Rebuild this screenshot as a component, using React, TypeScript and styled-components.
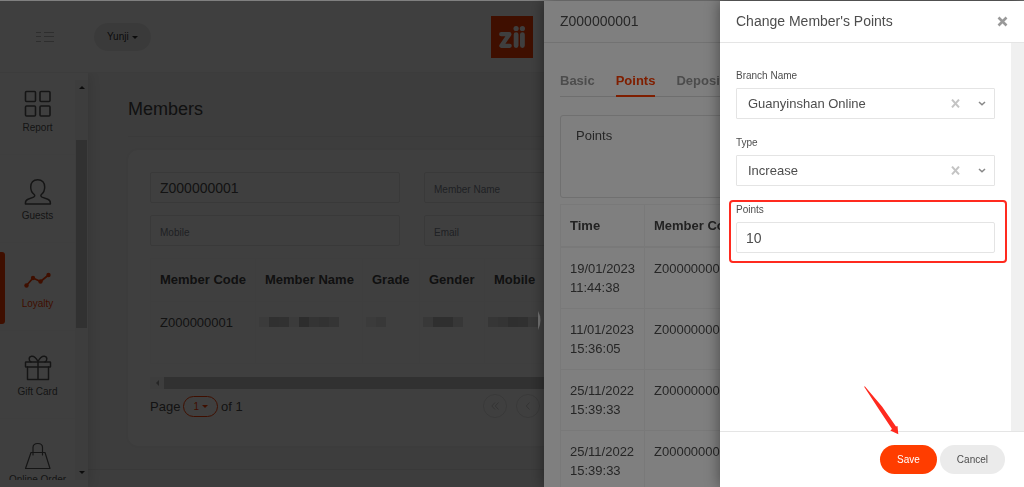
import React from 'react';
import styled, { createGlobalStyle, css } from 'styled-components';

const GlobalStyle = createGlobalStyle`
  *, *::before, *::after { box-sizing: border-box; }
  html, body { margin: 0; height: 100%; overflow: hidden; }
  #root { height: 100%; }
  body {
    font-family: "Liberation Sans", Arial, sans-serif;
    font-size: 13px;
    color: #4d4d4d;
    background: #808080;
  }
  button, input, select { font: inherit; color: inherit; }
`;

const Shell = styled.div`
  display: grid;
  grid-template-rows: auto 1fr;
  height: 100vh;
  padding-top: 1px;
`;

const TopBar = styled.header`
  display: grid;
  grid-template-columns: 1fr auto 1fr;
  align-items: center;
  padding: 15px 36px 14px;
  background: #fff;
  border-bottom: 1px solid #f0f0f0;
`;

const TopLeft = styled.div`
  display: flex;
  align-items: center;
  gap: 40px;
`;

const MenuButton = styled.button`
  display: flex;
  padding: 0;
  border: 0;
  background: none;
  color: #bbb;
`;

const BranchButton = styled.button`
  display: flex;
  align-items: center;
  gap: 3px;
  padding: 8px 13px;
  border: 0;
  border-radius: 14px;
  background: #ebebeb;
  color: #333;
  font-size: 10px;
  line-height: 12px;
`;

const Caret = styled.span`
  border: 3px solid transparent;
  border-top-color: currentColor;
  border-bottom: 0;
`;

const Body = styled.div`
  display: grid;
  grid-template-columns: 88px 1fr;
  min-height: 0;
  overflow: hidden;
`;

const Sidebar = styled.aside`
  position: relative;
  display: grid;
  grid-template-columns: 1fr 13px;
  min-height: 0;
  padding: 7px 0;
  background: #fff;
  box-shadow: 2px 0 12px rgba(0, 0, 0, 0.12);
`;

const NavList = styled.nav`
  min-height: 0;
  overflow: hidden;
`;

const NavItem = styled.a<{ $active?: boolean; $first?: boolean }>`
  position: relative;
  display: flex;
  flex-direction: column;
  align-items: center;
  gap: 2px;
  padding: ${p => (p.$first ? 10 : 23)}px 0 18px;
  border-bottom: 1px solid #f8f8f8;
  color: ${p => (p.$active ? '#ff3d00' : '#555')};
  font-size: 10px;
  line-height: 16px;
  text-decoration: none;
  white-space: nowrap;

  ${p => p.$active && css`
    &::before {
      content: '';
      position: absolute;
      left: 0;
      top: 9px;
      bottom: 6px;
      width: 5px;
      border-radius: 0 3px 3px 0;
      background: #ff3d00;
    }
  `}
`;

const ScrollTrack = styled.div`
  display: flex;
  flex-direction: column;
  align-items: center;
  background: #f5f5f5;
  color: #333;
`;

const ScrollArrow = styled.span<{ $down?: boolean }>`
  margin: 6px 0;
  border: 3px solid transparent;
  ${p => p.$down
    ? 'border-top-color: currentColor; border-bottom: 0;'
    : 'border-bottom-color: currentColor; border-top: 0;'}
`;

const ScrollThumb = styled.span`
  flex: 0 0 47%;
  width: 11px;
  margin-top: 45px;
  margin-bottom: auto;
  background: #c4c4c4;
`;

const Main = styled.main`
  display: flex;
  flex-direction: column;
  min-width: 0;
  overflow: hidden;
  padding-top: 25px;
  background: #f5f5f5;
`;

const Content = styled.div`
  padding: 0 54px 23px 40px;
`;

const PageTitle = styled.h1`
  margin: 0 0 13px;
  padding-bottom: 16px;
  border-bottom: 1px solid #e9e9e9;
  color: #444;
  font-size: 18px;
  font-weight: 400;
  line-height: 22px;
`;

const Card = styled.section`
  padding: 22px 22px 28px;
  border-radius: 10px;
  background: #fff;
  box-shadow: 0 0 4px rgba(0, 0, 0, 0.05);
`;

const Filters = styled.form`
  display: grid;
  grid-template-columns: repeat(3, 1fr);
  gap: 12px 24px;
  margin-bottom: 12px;
`;

const TextInput = styled.input`
  width: 100%;
  height: 31px;
  padding: 0 9px;
  border: 1px solid #e4e4e4;
  border-radius: 2px;
  outline: 0;
  background: #fff;
  font-size: 14px;
  &::placeholder { color: #7c8590; font-size: 10px; opacity: 1; }
`;

const MemberTable = styled.table`
  width: 100%;
  border-collapse: collapse;
  table-layout: fixed;
  margin-bottom: 13px;
  text-align: left;
  line-height: 18px;
  th, td { padding: 12px 9px; border: 1px solid #f8f8f8; vertical-align: top; white-space: nowrap; }
  th { color: #444; }
  td { padding-bottom: 31px; }
`;

const Mosaic = styled.span`
  display: flex;
  height: 10px;
  margin: 3px -9px 0 -6px;
`;

const Tile = styled.i<{ $shade: string }>`
  width: 10px;
  background: ${p => p.$shade};
`;

const HScroll = styled.div`
  display: grid;
  grid-template-columns: 14px 1fr 14px;
  height: 12px;
  background: #f5f5f5;
  color: #999;
`;

const HArrow = styled.span`
  place-self: center;
  border: 3px solid transparent;
  border-right-color: currentColor;
  border-left: 0;
`;

const HThumb = styled.span`
  background: #c4c4c4;
`;

const Pager = styled.div`
  display: grid;
  grid-template-columns: 5fr 7fr;
  align-items: center;
  margin-top: 5px;
`;

const PagerLabel = styled.div`
  display: flex;
  align-items: center;
  gap: 3px;
`;

const PagePill = styled.button`
  display: flex;
  align-items: center;
  gap: 3px;
  padding: 3px 9px;
  border: 1px solid #ff3d00;
  border-radius: 11px;
  background: none;
  color: #ff3d00;
  font-size: 10px;
  line-height: 13px;
`;

const PagerButtons = styled.div`
  display: flex;
  gap: 9px;
`;

const RoundButton = styled.button`
  display: grid;
  place-items: center;
  width: 24px;
  height: 24px;
  padding: 0;
  border: 1px solid #e3e3e3;
  border-radius: 50%;
  background: none;
  color: #ccc;
`;

const Footer = styled.footer`
  flex: 1;
  border-top: 1px solid #e6e6e6;
`;

const Overlay = styled.div`
  position: fixed;
  inset: 1px 0 0;
  display: flex;
  justify-content: flex-end;
  background: rgba(0, 0, 0, 0.5);
`;

const Drawer = styled.section<{ $width: number }>`
  display: flex;
  flex-direction: column;
  width: ${p => p.$width}px;
  max-width: 100%;
  overflow: hidden;
  background: #fff;
  box-shadow: 0 0 14px rgba(0, 0, 0, 0.45);
`;

const DrawerHead = styled.header`
  display: flex;
  align-items: center;
  justify-content: space-between;
  padding: 10px 16px;
  border-bottom: 1px solid #e5e5e5;
`;

const DrawerTitle = styled.h2`
  margin: 0;
  font-size: 14px;
  font-weight: 400;
  line-height: 21px;
`;

const IconButton = styled.button`
  display: flex;
  padding: 0;
  border: 0;
  background: none;
  color: #999;
`;

const DetailBody = styled.div`
  padding: 28px 16px 0;
`;

const Tabs = styled.div`
  display: flex;
  gap: 21px;
  margin-bottom: 18px;
  border-bottom: 1px solid #ddd;
`;

const Tab = styled.button<{ $active?: boolean }>`
  margin-bottom: -1px;
  padding: 0 0 5px;
  border: 0;
  border-bottom: 2px solid ${p => (p.$active ? '#ff3d00' : 'transparent')};
  background: none;
  color: ${p => (p.$active ? '#ff3d00' : '#999')};
  font-weight: 700;
  line-height: 19px;
`;

const PointsCard = styled.div`
  min-height: 83px;
  margin-bottom: 6px;
  padding: 10px 15px;
  border: 1px solid #e0e0e0;
  border-radius: 3px;
  line-height: 19px;
`;

const HistoryTable = styled.table`
  width: 100%;
  border-collapse: collapse;
  table-layout: fixed;
  text-align: left;
  line-height: 19px;
  th, td { padding: 11px 9px; border: 1px solid #f3f3f3; vertical-align: top; }
  th { color: #444; border-bottom-width: 2px; }
`;

const FormArea = styled.div`
  display: grid;
  grid-template-columns: 1fr 13px;
  flex: 1;
  min-height: 0;
`;

const FormFields = styled.form`
  display: flex;
  flex-direction: column;
  gap: 16px;
  padding: 25px 16px;
`;

const Track = styled.div`
  background: #f0f0f0;
`;

const Field = styled.div<{ $marked?: boolean }>`
  position: relative;
  display: flex;
  flex-direction: column;
  gap: 5px;

  ${p => p.$marked && css`
    &::after {
      content: '';
      position: absolute;
      inset: -2px -12px -10px -7px;
      border: 2px solid #ff2a1f;
      border-radius: 4px;
      pointer-events: none;
    }
  `}
`;

const Label = styled.label`
  font-size: 10px;
  line-height: 15px;
`;

const SelectBox = styled.div`
  position: relative;
`;

const Select = styled.select`
  appearance: none;
  display: block;
  width: 100%;
  height: 31px;
  padding: 0 60px 0 11px;
  border: 1px solid #e4e4e4;
  border-radius: 1px;
  background: #fff;
`;

const SelectTools = styled.div`
  position: absolute;
  top: 0;
  right: 9px;
  bottom: 0;
  display: flex;
  align-items: center;
  gap: 18px;
  pointer-events: none;
`;

const DrawerFoot = styled.footer`
  display: flex;
  justify-content: flex-end;
  gap: 3px;
  padding: 13px 19px;
  border-top: 1px solid #e5e5e5;
`;

const Action = styled.button<{ $primary?: boolean }>`
  padding: 7px 17px;
  border: 0;
  border-radius: 15px;
  background: ${p => (p.$primary ? '#ff3d00' : '#ebebeb')};
  color: ${p => (p.$primary ? '#fff' : '#4d4d4d')};
  font-size: 10px;
  line-height: 15px;
`;

const Pointer = styled.svg`
  position: fixed;
  right: 124px;
  bottom: 52px;
  pointer-events: none;
`;

const Handle = styled.svg`
  position: fixed;
  right: 480px;
  top: 309px;
`;

const stroke = { fill: 'none', stroke: 'currentColor', strokeWidth: 1.6, strokeLinejoin: 'round', strokeLinecap: 'round' } as const;

const ReportIcon = () => (
  <svg width="28" height="28" viewBox="0 0 28 28" {...stroke}>
    <rect x="1.500" y="1.500" width="10" height="10" rx="1" /><rect x="16" y="1.500" width="10" height="10" rx="1" />
    <rect x="1.500" y="16" width="10" height="10" rx="1" /><rect x="16" y="16" width="10" height="10" rx="1" />
  </svg>
);
const GuestIcon = () => (
  <svg width="28" height="28" viewBox="0 0 28 28" {...stroke} strokeWidth="1.500">
    <path d="M13.700 1.700c-4.600 0-7 3.200-7 7.300 0 3.300 1.200 5.800 3.500 7.500.9.900.6 2.100-.6 2.600l-5.600 2.200c-2 .8-2.600 1.900-2.600 3.900v.8h25v-.8c0-2-.6-3.100-2.600-3.900l-5.800-2.200c-1.200-.5-1.500-1.700-.6-2.600C19.600 14.800 20.700 12.300 20.700 9c0-4.100-2.400-7.300-7-7.300z" />
  </svg>
);
const LoyaltyIcon = () => (
  <svg width="28" height="28" viewBox="0 0 28 28" {...stroke}>
    <path d="M2.500 19.500 9 12l7.500 3.500L24.500 9" strokeWidth="1.800" />
    <g fill="currentColor" stroke="none"><circle cx="2.500" cy="19.500" r="2.200" /><circle cx="9" cy="12" r="2.200" /><circle cx="16.500" cy="15.500" r="2.200" /><circle cx="24.500" cy="9" r="2.200" /></g>
  </svg>
);
const GiftIcon = () => (
  <svg width="28" height="28" viewBox="0 0 28 28" {...stroke} strokeWidth="1.500">
    <rect x="1.500" y="8" width="25" height="5" rx=".5" /><path d="M3.500 13V25.500h21V13M14 8V25.500M14 7.500C12.500 4.500 10 2 7.500 2.300 4.500 2.800 4.500 6.800 7 8M14 7.500c1.500-3 4-5.500 6.500-5.200 3 .5 3 4.500.5 5.700" />
  </svg>
);
const BagIcon = () => (
  <svg width="28" height="28" viewBox="0 0 28 28" {...stroke} strokeWidth="1.200">
    <path d="M7 10.500h14L26 26.500H1.500zM9 13V5.500C9 3 10.500 1.500 13.800 1.500s4.700 1.500 4.700 4V13" />
  </svg>
);

const MenuIcon = () => (
  <svg width="18" height="12" viewBox="0 0 18 12" stroke="currentColor" strokeWidth="1">
    <path d="M0 1.500h5M8 1.500h10M0 5.500h5M8 5.500h10M0 10.500h5M8 10.500h10" />
  </svg>
);

const Logo = () => (
  <svg width="42" height="42" viewBox="0 0 42 42" role="img" aria-label="zii">
    <rect width="42" height="42" fill="#ff3d00" />
    <g fill="none" stroke="#fff" strokeLinecap="round" strokeLinejoin="round">
      <path d="M10.200 18.200h8.200L10.400 29.800h8.300" strokeWidth="4.200" />
      <path d="M25.100 18.600v11M31.400 18.600v11" strokeWidth="4.800" />
    </g>
    <circle cx="25.100" cy="12.500" r="2.600" fill="#fff" /><circle cx="31.400" cy="12.500" r="2.600" fill="#fff" />
  </svg>
);

const ClearIcon = () => (
  <svg width="9" height="9" viewBox="0 0 9 9" stroke="#c4c4c4" strokeWidth="2"><path d="M1 .6l7 7.800M8 .6L1 8.400" /></svg>
);
const ChevronIcon = () => (
  <svg width="8" height="5" viewBox="0 0 8 5" fill="none" stroke="#888" strokeWidth="1.500"><path d="M1 1l3 2.800L7 1" /></svg>
);

const navItems = [
  { label: 'Report', icon: <ReportIcon /> },
  { label: 'Guests', icon: <GuestIcon /> },
  { label: 'Loyalty', icon: <LoyaltyIcon />, active: true },
  { label: 'Gift Card', icon: <GiftIcon /> },
  { label: 'Online Order', icon: <BagIcon /> },
];

const masked = [
  ['#ececec', '#c0c0c0', '#c4c4c4', '#ececec', '#b4b4b4', '#d0d0d0', '#c8c8c8', '#d4d4d4'],
  ['#ececec', '#e0e0e0'],
  ['#e0e0e0', '#bcbcbc', '#bcbcbc', '#dcdcdc'],
  ['#d8d8d8', '#d0d0d0', '#bcbcbc', '#c0c0c0', '#dcdcdc'],
];

const history = [
  ['19/01/2023', '11:44:38'],
  ['11/01/2023', '15:36:05'],
  ['25/11/2022', '15:39:33'],
  ['25/11/2022', '15:39:33'],
];

function PickerField({ id, label, value }: { id: string; label: string; value: string }) {
  return (
    <Field>
      <Label htmlFor={id}>{label}</Label>
      <SelectBox>
        <Select id={id} defaultValue={value}><option>{value}</option></Select>
        <SelectTools><ClearIcon /><ChevronIcon /></SelectTools>
      </SelectBox>
    </Field>
  );
}

export default function App() {
  return (
    <>
      <GlobalStyle />
      <Shell>
        <TopBar>
          <TopLeft>
            <MenuButton aria-label="Menu"><MenuIcon /></MenuButton>
            <BranchButton>Yunji<Caret /></BranchButton>
          </TopLeft>
          <Logo />
        </TopBar>
        <Body>
          <Sidebar>
            <NavList>
              {navItems.map((item, i) => (
                <NavItem key={item.label} href="#" $active={item.active} $first={i === 0}>
                  {item.icon}
                  {item.label}
                </NavItem>
              ))}
            </NavList>
            <ScrollTrack><ScrollArrow /><ScrollThumb /><ScrollArrow $down /></ScrollTrack>
          </Sidebar>
          <Main>
            <Content>
              <PageTitle>Members</PageTitle>
              <Card>
                <Filters>
                  <TextInput aria-label="Member Code" defaultValue="Z000000001" />
                  <TextInput aria-label="Member Name" placeholder="Member Name" />
                  <span />
                  <TextInput aria-label="Mobile" placeholder="Mobile" />
                  <TextInput aria-label="Email" placeholder="Email" />
                </Filters>
                <MemberTable>
                  <colgroup><col width="105" /><col width="107" /><col width="57" /><col width="65" /><col /></colgroup>
                  <thead>
                    <tr><th>Member Code</th><th>Member Name</th><th>Grade</th><th>Gender</th><th>Mobile</th></tr>
                  </thead>
                  <tbody>
                    <tr>
                      <td>Z000000001</td>
                      {masked.map((tiles, i) => (
                        <td key={i}><Mosaic>{tiles.map((shade, j) => <Tile key={j} $shade={shade} />)}</Mosaic></td>
                      ))}
                    </tr>
                  </tbody>
                </MemberTable>
                <HScroll><HArrow /><HThumb /></HScroll>
                <Pager>
                  <PagerLabel>Page <PagePill>1<Caret /></PagePill> of 1</PagerLabel>
                  <PagerButtons>
                    <RoundButton aria-label="First page"><svg width="8" height="8" viewBox="0 0 8 8" fill="none" stroke="currentColor"><path d="M4 .5L.8 4 4 7.500M7.500.5L4.300 4l3.200 3.500" /></svg></RoundButton>
                    <RoundButton aria-label="Previous page"><svg width="8" height="8" viewBox="0 0 8 8" fill="none" stroke="currentColor"><path d="M5.500.5L2.300 4l3.200 3.500" /></svg></RoundButton>
                  </PagerButtons>
                </Pager>
              </Card>
            </Content>
            <Footer />
          </Main>
        </Body>
      </Shell>

      <Overlay>
        <Drawer $width={480}>
          <DrawerHead><DrawerTitle>Z000000001</DrawerTitle></DrawerHead>
          <DetailBody>
            <Tabs role="tablist">
              <Tab role="tab">Basic</Tab>
              <Tab role="tab" $active>Points</Tab>
              <Tab role="tab">Deposit</Tab>
            </Tabs>
            <PointsCard>Points</PointsCard>
            <HistoryTable>
              <colgroup><col width="84" /><col /></colgroup>
              <thead><tr><th>Time</th><th>Member Code</th></tr></thead>
              <tbody>
                {history.map(([date, time], i) => (
                  <tr key={i}><td>{date}<br />{time}</td><td>Z000000001</td></tr>
                ))}
              </tbody>
            </HistoryTable>
          </DetailBody>
        </Drawer>
      </Overlay>

      <Overlay>
        <Handle width="8" height="24" viewBox="0 0 8 24">
          <path d="M2 2q5 9 0 19z" fill="#666" />
        </Handle>
        <Drawer $width={304} role="dialog" aria-label="Change Member's Points">
          <DrawerHead>
            <DrawerTitle>Change Member's Points</DrawerTitle>
            <IconButton aria-label="Close">
              <svg width="11" height="11" viewBox="0 0 11 11" stroke="currentColor" strokeWidth="2.600"><path d="M1.500 1.500l8 8M9.500 1.500l-8 8" /></svg>
            </IconButton>
          </DrawerHead>
          <FormArea>
            <FormFields>
              <PickerField id="branch" label="Branch Name" value="Guanyinshan Online" />
              <PickerField id="type" label="Type" value="Increase" />
              <Field $marked>
                <Label htmlFor="points">Points</Label>
                <TextInput id="points" defaultValue="10" />
              </Field>
            </FormFields>
            <Track />
          </FormArea>
          <DrawerFoot>
            <Action $primary>Save</Action>
            <Action>Cancel</Action>
          </DrawerFoot>
        </Drawer>
        <Pointer width="38" height="50" viewBox="0 0 38 50">
          <path d="M2 1.500L3 1.500 20 21.500 34 41.500 35.500 41 36.300 49.300 28.300 45.500 30 44 17 24.500z" fill="#ff2a1f" />
        </Pointer>
      </Overlay>
    </>
  );
}
